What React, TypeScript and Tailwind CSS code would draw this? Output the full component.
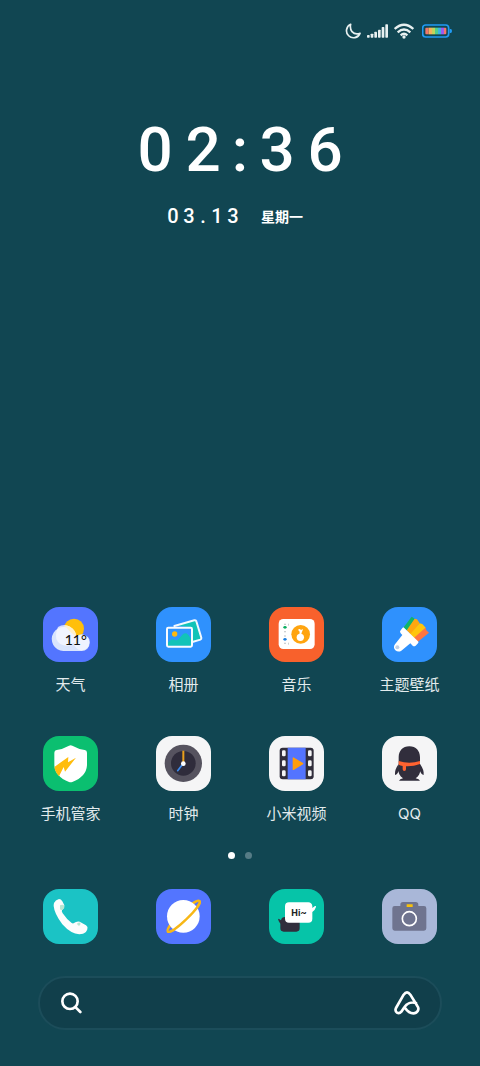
import type { ReactNode } from "react";

/**
 * Phone home screen: status bar, clock, one page of apps, the dock and the
 * search bar. Every app glyph is drawn on a 165 unit square.
 */

interface AppEntry {
  id: string;
  label: string;
  tile: string;
  glyph: ReactNode;
}

const weather = (
  <>
    <circle cx="93" cy="65" r="30" fill="#ffbf0b" />
    <path
      d="M61 132a36 36 0 1 1 33-53q4 6 5 12a23 23 0 0 1 41 16 24 24 0 0 1-25 25z"
      fill="#d9e4fd"
    />
    <circle cx="116" cy="107" r="23" fill="#eef3ff" />
    <path d="M45 60a36 36 0 0 1 55 30q-2 20-22 26-30 2-38-20-3-20 5-36z" fill="#f6f8ff" opacity="0.8" />
    <path d="M66 55a36 36 0 0 1 34 33q-20-10-34-33z" fill="#fff1c9" />
    <text
      x="65"
      y="114"
      fontSize="42"
      fontWeight="500"
      fill="#111"
      className="font-[Lato,sans-serif]"
    >
      11°
    </text>
  </>
);

const photos = (
  <>
    <path d="M60 56l56-16q4-1 5 3l15 49q1 4-3 5l-26 7V60z" fill="#12c3b8" />
    <path
      d="M55 57l60-17q5-1 6 3l15 49q1 4-3 6l-24 7"
      fill="none"
      stroke="#f2f8ff"
      strokeWidth="6"
      strokeLinecap="round"
    />
    <rect x="33" y="62" width="75" height="57" rx="4" fill="#2f95fd" />
    <path d="M36 107q12-14 20-9t14-4q12-18 21-15 6 3 14 16v21H36z" fill="#12c3b8" />
    <circle cx="56" cy="81" r="8" fill="#ffb90d" />
    <rect x="33" y="62" width="75" height="57" rx="4" fill="none" stroke="#f8fbff" strokeWidth="6" />
  </>
);

const music = (
  <>
    <rect x="29" y="36" width="108" height="90" rx="14" fill="#fff" />
    <circle cx="95" cy="82" r="28" fill="#ffa40f" />
    <circle cx="94" cy="91" r="11" fill="#fff" />
    <path d="M88 67q4-3 7 1 2 2 7-3-1 6-3 9l-3 10h-5l1-10q-5-3-4-7z" fill="#fff" />
    <g fill="#b4babd">
      <rect x="46" y="50" width="4" height="4" />
      <rect x="46" y="72" width="4" height="4" />
      <rect x="46" y="85" width="4" height="4" />
      <rect x="46" y="107" width="4" height="4" />
      <rect x="57" y="50" width="2" height="6" />
      <rect x="57" y="107" width="2" height="6" />
    </g>
    <ellipse cx="48" cy="61" rx="5" ry="4" fill="#0aae60" />
    <ellipse cx="48" cy="97" rx="5" ry="4" fill="#1b7fe0" />
  </>
);

const themes = (
  <>
    <path d="M64 62L89 29l9 6-22 36z" fill="#0fb56a" />
    <path d="M74 70l24-35 7 2 8 12-26 34z" fill="#ffa70f" />
    <path d="M85 81l28-32 8 2 10 11-33 33z" fill="#ffc50d" />
    <path d="M96 92l35-30 2 8 8 7-34 28z" fill="#ff7540" />
    <path
      d="M66 62l42 41q3 3 0 6l-7 7q-5 4-9 0l-7-7-27 22q-9 6-18-1-8-9-1-18l22-28-5-5q-4-5 0-9l6-8q2-2 4 0z"
      fill="#fff"
    />
    <circle cx="46" cy="121" r="6" fill="#c3d0e4" />
  </>
);

const security = (
  <>
    <path
      d="M78 29q5-3 10 0 18 10 37 13 7 1 7 8v38q-2 34-44 50-5 2-10 0-42-16-44-50V50q0-7 7-8 19-3 37-13z"
      fill="#fff"
    />
    <path d="M35 92l41-29-1 16 24-14-33 42-4-14-14 28q-9-10-13-22z" fill="#ffbd0d" />
  </>
);

const clock = (
  <>
    <circle cx="82" cy="82" r="56" fill="#56535f" />
    <circle cx="82" cy="82" r="37" fill="#2f2c3b" />
    <path d="M82 82V44" stroke="#e9a01b" strokeWidth="6" />
    <path d="M82 82l-17 22" stroke="#3b8cf0" strokeWidth="5" strokeLinecap="round" />
    <circle cx="82" cy="83" r="7" fill="#fff" />
  </>
);

const video = (
  <>
    <rect x="32" y="35" width="102" height="95" rx="9" fill="#312e3c" />
    <path d="M56 35h54v95H56z" fill="#5374ff" />
    <g fill="#f5f5f6">
      <rect x="39" y="43" width="11" height="18" rx="4" />
      <rect x="39" y="73" width="11" height="18" rx="4" />
      <rect x="39" y="103" width="11" height="18" rx="4" />
      <rect x="117" y="43" width="11" height="18" rx="4" />
      <rect x="117" y="73" width="11" height="18" rx="4" />
      <rect x="117" y="103" width="11" height="18" rx="4" />
    </g>
    <path d="M73 66l28 17-28 17z" fill="#ff9d0c" stroke="#ff9d0c" strokeWidth="4" strokeLinejoin="round" />
  </>
);

const qq = (
  <>
    <path
      d="M82 31c20 0 32 14 32 32v20c4 20 0 36-13 44q11 2 13 7H51q2-5 12-7c-13-8-17-24-13-44V63c0-18 12-32 32-32z"
      fill="#312e3c"
    />
    <path d="M50 84q-13 18-11 33 8-2 12-14z" fill="#312e3c" />
    <path d="M114 84q13 18 11 33-8-2-12-14z" fill="#312e3c" />
    <path
      d="M50 75q32 10 64 0v9q-20 8-42 7v9q0 5-5 5t-5-5v-10q-7-1-12-4z"
      fill="#ff6330"
    />
  </>
);

const phone = (
  <>
    <path
      d="M33 42q4-9 15-12 6 0 10 7l6 12q1 7-7 15-2 3 2 9 12 18 27 29 5 3 11-2 8-4 13-2l19 11q7 5 4 12-4 11-13 13-30 8-62-28Q34 74 32 51q0-5 1-9z"
      fill="#fdfdfd"
    />
    <path d="M51 49q8-4 13 1 2 6-5 12-7 2-8-2z" fill="#b9e6d2" />
    <path d="M102 104q4-4 10-3 2 5-3 9-4 1-7-6z" fill="#b9e6d2" />
  </>
);

const browser = (
  <>
    <ellipse
      cx="83"
      cy="82"
      rx="66"
      ry="12"
      transform="rotate(-44 83 82)"
      fill="none"
      stroke="#f7b716"
      strokeWidth="7"
    />
    <circle cx="82" cy="82" r="49" fill="#fff" />
    <path
      d="M17 82a66 12 0 0 0 132 0"
      transform="rotate(-44 83 82)"
      fill="none"
      stroke="#f7b716"
      strokeWidth="7"
    />
  </>
);

const messages = (
  <>
    <path
      d="M27 89q5 1 9 5 2-10 12-10h34q10 0 10 10v24q0 10-10 10H44q-10 0-10-10v-14q-6-7-7-15z"
      fill="#312e3c"
    />
    <path
      d="M60 40h58q10 0 12 11v6l8-6q4-1 3 3-3 10-11 15v20q0 12-12 12H60q-12 0-12-12V52q0-12 12-12z"
      fill="#fff"
    />
    <text
      x="67"
      y="81"
      fontSize="28"
      fontWeight="700"
      fill="#222"
      className="font-[Roboto,sans-serif]"
    >
      Hi~
    </text>
  </>
);

const camera = (
  <>
    <path
      d="M63 39h38q8 0 8 8v4h17q7 0 7 7v60q0 7-7 7H38q-7 0-7-7V58q0-7 7-7h17v-4q0-8 8-8z"
      fill="#6f748f"
    />
    <path d="M74 46h18v8H74z" fill="#f8c20c" />
    <circle cx="82" cy="89" r="21" fill="none" stroke="#fff" strokeWidth="5" />
  </>
);

const pageApps: AppEntry[] = [
  { id: "weather", label: "天气", tile: "bg-[#5375ff]", glyph: weather },
  { id: "photos", label: "相册", tile: "bg-[#2f91fd]", glyph: photos },
  { id: "music", label: "音乐", tile: "bg-[#f8612c]", glyph: music },
  { id: "themes", label: "主题壁纸", tile: "bg-[#2f91fd]", glyph: themes },
  { id: "security", label: "手机管家", tile: "bg-[#0bbf70]", glyph: security },
  { id: "clock", label: "时钟", tile: "bg-[#f5f5f6]", glyph: clock },
  { id: "video", label: "小米视频", tile: "bg-[#f5f5f6]", glyph: video },
  { id: "qq", label: "QQ", tile: "bg-[#f5f5f6]", glyph: qq },
];

const dockApps: AppEntry[] = [
  { id: "phone", label: "电话", tile: "bg-[#1bc3c5]", glyph: phone },
  { id: "browser", label: "浏览器", tile: "bg-[#5375ff]", glyph: browser },
  { id: "messages", label: "短信", tile: "bg-[#06c4a8]", glyph: messages },
  { id: "camera", label: "相机", tile: "bg-[#a9b7d8]", glyph: camera },
];

function AppTile({ app, showLabel }: { app: AppEntry; showLabel: boolean }) {
  return (
    <button
      type="button"
      aria-label={app.label}
      className="flex flex-col items-center gap-[11px]"
    >
      <span className={`block size-[55px] overflow-hidden rounded-2xl ${app.tile}`}>
        <svg viewBox="0 0 165 165" className="size-full" aria-hidden="true">
          {app.glyph}
        </svg>
      </span>
      {showLabel && (
        <span className="font-[Inter,'Noto_Sans_CJK_SC',sans-serif] text-[15px] leading-6 whitespace-nowrap text-[#e3ebed]">
          {app.label}
        </span>
      )}
    </button>
  );
}

function StatusBar() {
  return (
    <header className="flex h-[62px] items-center justify-end px-7 text-[#e8f0f0]">
      <svg viewBox="0 0 48 48" className="mr-1.5 size-4" aria-hidden="true">
        <path
          d="M17 4A21 21 0 1 0 45 31Q30 36 21 26 14 16 17 4z"
          fill="none"
          stroke="currentColor"
          strokeWidth="5"
          strokeLinejoin="round"
        />
      </svg>
      <svg viewBox="0 0 63 42" className="mr-1.5 h-3.5 w-[21px]" fill="currentColor" aria-hidden="true">
        <rect x="0" y="33" width="8" height="8" rx="2" />
        <rect x="11" y="29" width="8" height="12" rx="2" />
        <rect x="22" y="23" width="8" height="18" rx="2" />
        <rect x="33" y="17" width="8" height="24" rx="2" />
        <rect x="44" y="9" width="8" height="32" rx="2" />
        <rect x="55" y="1" width="8" height="40" rx="2" />
      </svg>
      <svg viewBox="0 0 60 48" className="mr-2 h-4 w-5" aria-hidden="true">
        <g fill="none" stroke="currentColor" strokeWidth="7">
          <path d="M2 18q28-25 56 0" />
          <path d="M11 28q19-17 38 0" />
          <path d="M20 37q10-9 20 0" />
        </g>
        <circle cx="30" cy="42" r="5" fill="currentColor" />
      </svg>
      <svg viewBox="0 0 90 42" className="h-3.5 w-[30px]" aria-hidden="true">
        <rect x="2" y="3" width="78" height="36" rx="9" fill="none" stroke="#1f9bf5" strokeWidth="5" />
        <path d="M83 15h3q4 0 4 6t-4 6h-3z" fill="#1f9bf5" />
        <path d="M13 11h7v20h-7q-3 0-3-3V14q0-3 3-3z" fill="#f2776b" />
        <path d="M20 11h10v20H20z" fill="#f5b35c" />
        <path d="M30 11h9v20h-9z" fill="#c2d65c" />
        <path d="M39 11h9v20h-9z" fill="#4fd08f" />
        <path d="M48 11h9v20h-9z" fill="#3cb6e0" />
        <path d="M57 11h9v20h-9z" fill="#9a5cf0" />
        <path d="M66 11h4q3 0 3 3v14q0 3-3 3h-4z" fill="#f2776b" />
      </svg>
    </header>
  );
}

function Clock() {
  return (
    <section className="flex flex-col items-center pt-14 text-white">
      <time className="flex font-[Roboto,sans-serif] text-[62px] leading-[64px] font-medium">
        <span className="w-12 text-center">0</span>
        <span className="w-12 text-center">2</span>
        <span className="w-[26px] text-center">:</span>
        <span className="w-12 text-center">3</span>
        <span className="w-12 text-center">6</span>
      </time>
      <p className="mt-5 flex items-center pr-3 leading-6">
        <span className="flex font-[Roboto,sans-serif] text-xl font-medium">
          <span className="w-4 text-center">0</span>
          <span className="w-4 text-center">3</span>
          <span className="w-3 text-center">.</span>
          <span className="w-4 text-center">1</span>
          <span className="w-4 text-center">3</span>
        </span>
        <span className="ml-5 text-sm leading-5 font-bold">星期一</span>
      </p>
    </section>
  );
}

function SearchBar() {
  return (
    <form
      role="search"
      className="mx-[38px] flex h-[54px] items-center rounded-full border-2 border-[#1c4d5a] bg-[#113f4b] px-5 text-white"
    >
      <label htmlFor="search" aria-label="搜索">
        <svg viewBox="0 0 66 66" className="size-[22px]" aria-hidden="true">
          <g fill="none" stroke="currentColor" strokeWidth="8" strokeLinecap="round">
            <circle cx="30" cy="28" r="23" />
            <path d="M47 46l14 14" />
          </g>
        </svg>
      </label>
      <input
        id="search"
        type="search"
        className="mx-3 min-w-0 flex-1 bg-transparent text-base outline-none"
      />
      <button type="button" aria-label="语音助手">
        <svg viewBox="0 0 78 72" className="h-6 w-[26px]" aria-hidden="true">
          <path
            d="M66 36c-14-4-28 2-35 13l-9 13q-6 7-13 3-7-5-3-14L29 11q10-14 20 0l21 34c8 11-1 22-12 22-10 0-18-6-24-15"
            fill="none"
            stroke="currentColor"
            strokeWidth="8"
            strokeLinecap="round"
            strokeLinejoin="round"
          />
        </svg>
      </button>
    </form>
  );
}

export default function App() {
  return (
    <main className="flex min-h-screen flex-col bg-[#114652] pb-9 font-['Noto_Sans_CJK_SC',sans-serif]">
      <StatusBar />
      <Clock />
      <div className="flex-1" />
      <section className="grid grid-cols-4 gap-y-[39px] px-3.5">
        {pageApps.map((app) => (
          <AppTile key={app.id} app={app} showLabel />
        ))}
      </section>
      <div className="mt-[26px] flex justify-center gap-2.5">
        <span className="size-[7px] rounded-full bg-white" />
        <span className="size-[7px] rounded-full bg-[#567c86]" />
      </div>
      <nav className="mt-[30px] mb-8 grid grid-cols-4 px-3.5">
        {dockApps.map((app) => (
          <AppTile key={app.id} app={app} showLabel={false} />
        ))}
      </nav>
      <SearchBar />
    </main>
  );
}
